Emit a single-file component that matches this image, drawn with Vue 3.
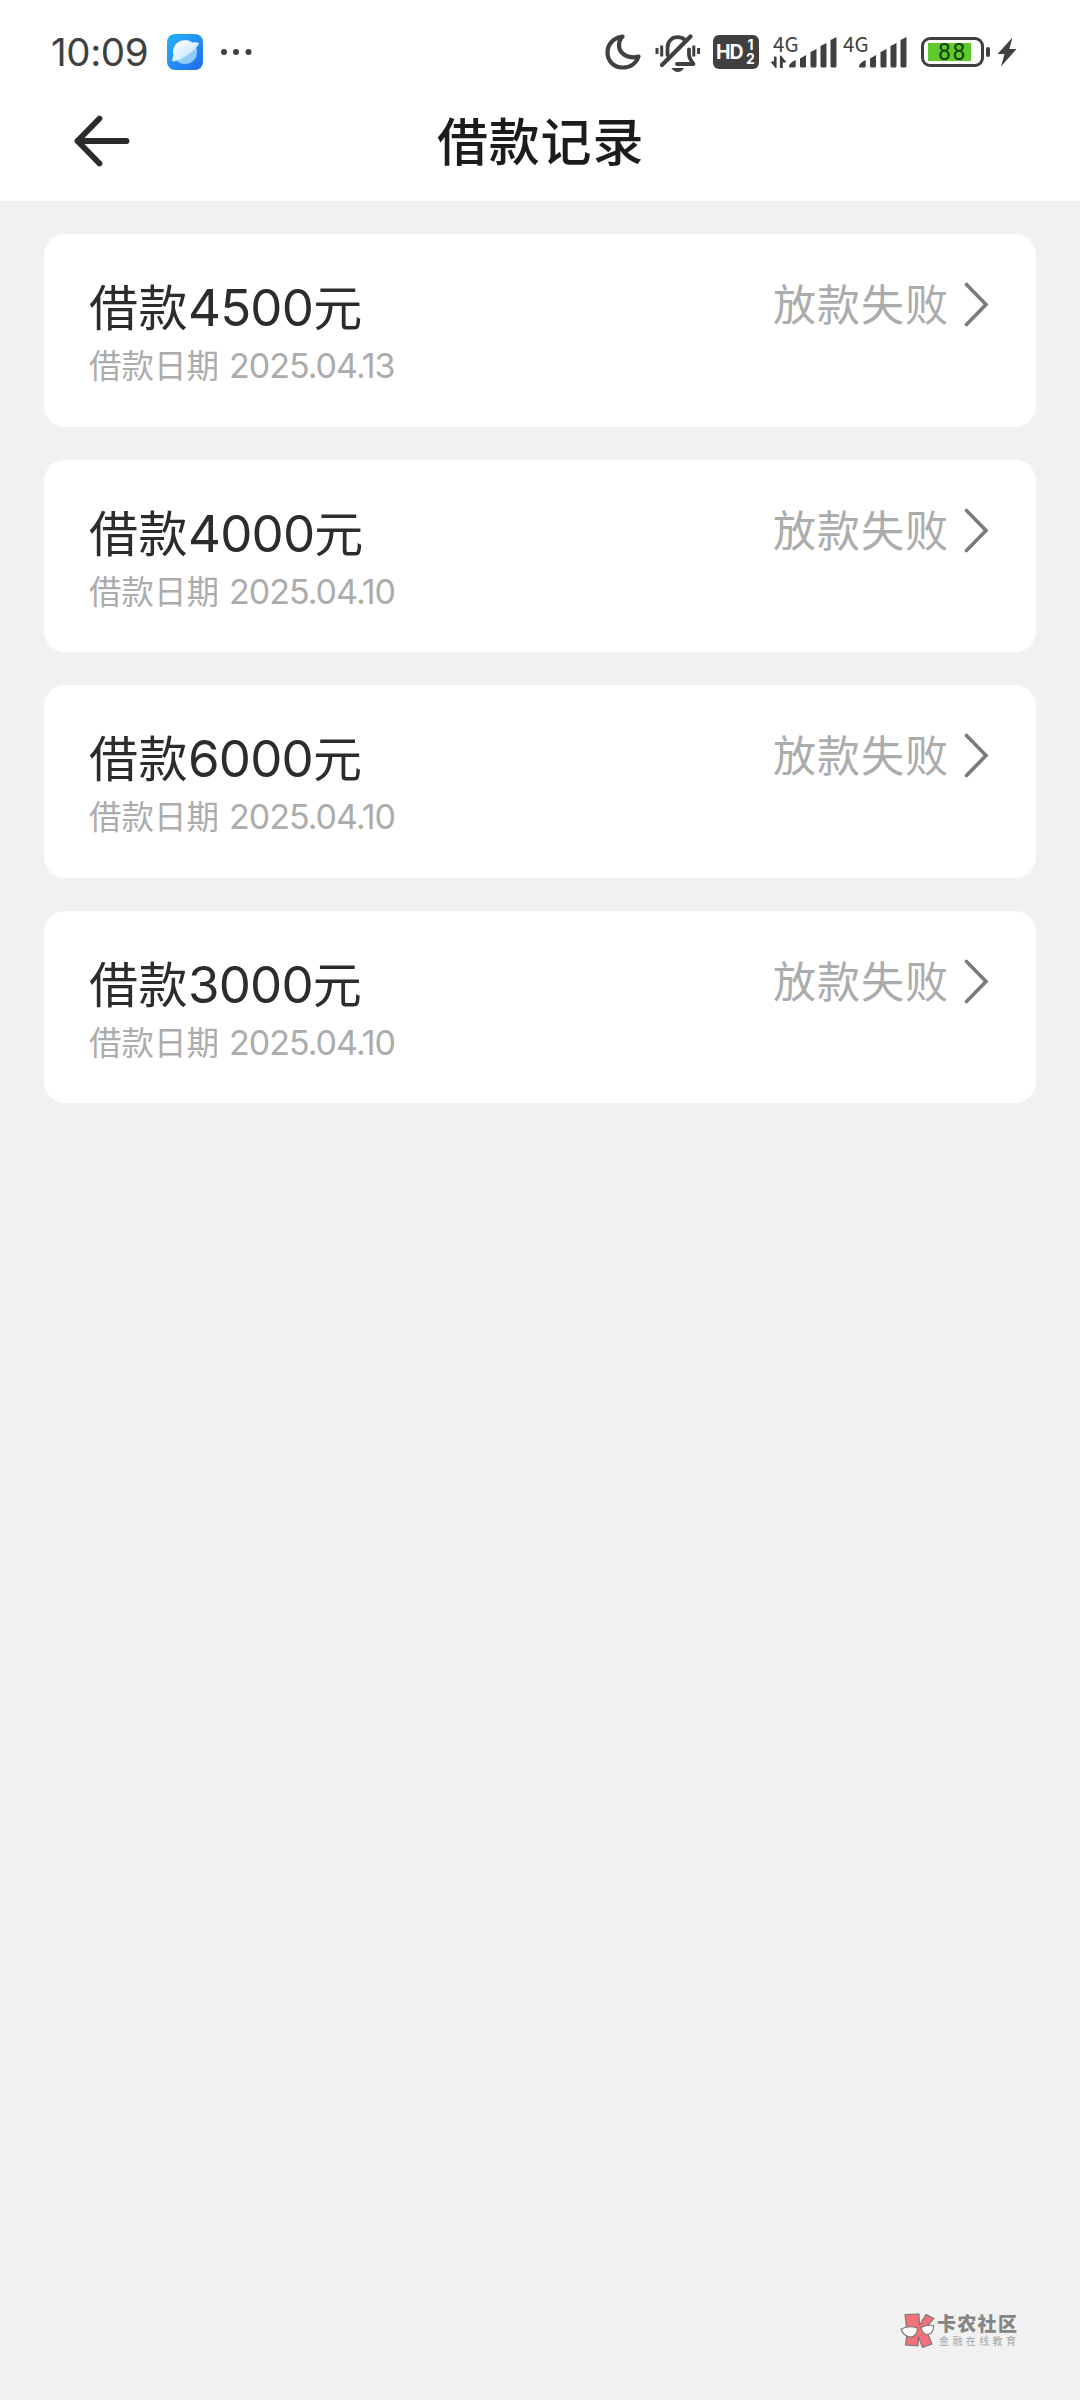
<script setup>
const records = [
  { amount: '4500', date: '2025.04.13' },
  { amount: '4000', date: '2025.04.10' },
  { amount: '6000', date: '2025.04.10' },
  { amount: '3000', date: '2025.04.10' },
]
</script>

<template>
  <div class="screen">
    <header class="top">
      <div class="status-bar">
        <span class="clock">10:09</span>
        <svg class="app-icon" width="36" height="36" viewBox="0 0 36 36">
          <defs>
            <linearGradient id="sky" x1="0" y1="0" x2="1" y2="1">
              <stop offset="0" stop-color="#25b5f5" />
              <stop offset="1" stop-color="#2268ee" />
            </linearGradient>
            <linearGradient id="planet" x1="0" y1="0" x2="1" y2="1">
              <stop offset="0" stop-color="#fff" />
              <stop offset="1" stop-color="#b9e2fc" />
            </linearGradient>
          </defs>
          <rect width="36" height="36" rx="8" fill="url(#sky)" />
          <circle cx="18" cy="18" r="12" fill="#8fcbfb" />
          <path d="M6.500 21.500A12 12 0 0 1 25 8.400Q31 7.600 32 9.400C30 15 16 26 6 27.500Q4.300 26.500 6.500 21.500Z" fill="url(#planet)" />
        </svg>
        <svg class="dots" width="32" height="8" viewBox="0 0 32 8" fill="#404040">
          <circle cx="4" cy="4" r="3" /><circle cx="16" cy="4" r="3" /><circle cx="28.500" cy="4" r="3" />
        </svg>
        <svg class="moon" width="36" height="36" viewBox="0 0 36 36">
          <path d="M17.500 2.500C7.500 4 2.500 11 2.500 18.500C2.500 27 9 33.500 17.500 33.500C25.500 33.500 31.500 29 33.500 22.500C31.500 23.500 29 23.500 26 23.200C19 22.500 14 17.500 14 11.500C14 8 15 5 17.500 2.500Z" fill="none" stroke="#404040" stroke-width="4.200" stroke-linejoin="round" />
        </svg>
        <svg class="bell" width="46" height="40" viewBox="0 0 46 40" fill="none" stroke="#404040" stroke-width="3.800" stroke-linecap="round" stroke-linejoin="round">
          <path d="M12.500 22V15C12.500 8 17 4.200 22.500 4.200C25.500 4.200 28 5.200 30 7" />
          <path d="M34 16.500V22Q34.500 26 38.500 31H22" />
          <path d="M35.500 3.500L7 32" stroke-width="4.200" />
          <path d="M2 15V21M6.700 12.500V23.500M38.800 12.500V23.500M43.600 15V21" stroke-width="3" stroke-linecap="butt" />
          <path d="M16.500 35H29Q26.500 39 22.800 39Q19 39 16.500 35Z" fill="#404040" stroke="none" />
        </svg>
        <span class="hd"><span class="hd-main">HD</span><span class="hd-sims"><span>1</span><span>2</span></span></span>
        <span class="signal first">
          <span class="net">4G</span>
          <svg width="66" height="34" viewBox="0 0 66 34" fill="#404040">
            <path d="M5 22V32.500L0.500 27H3.500V22ZM9.500 21L14.500 27H11.200V32.500H9.500Z" stroke="#404040" stroke-width="1.200" stroke-linejoin="round" />
            <path d="M18 31.500Q18 28 24.700 25V31Q24.700 32.500 23.200 32.500H19Q18 32.500 18 31.500ZM29 23.500L35 20V31Q35 32.500 33.500 32.500H30.500Q29 32.500 29 31ZM39.500 17L45.500 14V31Q45.500 32.500 44 32.500H41Q39.500 32.500 39.500 31ZM49.500 11L55.500 8V31Q55.500 32.500 54 32.500H51Q49.500 32.500 49.500 31ZM59.500 5L65.500 2V31Q65.500 32.500 64 32.500H61Q59.500 32.500 59.500 31Z" />
          </svg>
        </span>
        <span class="signal second">
          <span class="net">4G</span>
          <svg width="66" height="34" viewBox="0 0 66 34" fill="#404040">
            <path d="M18 31.500Q18 28 24.700 25V31Q24.700 32.500 23.200 32.500H19Q18 32.500 18 31.500ZM29 23.500L35 20V31Q35 32.500 33.500 32.500H30.500Q29 32.500 29 31ZM39.500 17L45.500 14V31Q45.500 32.500 44 32.500H41Q39.500 32.500 39.500 31ZM49.500 11L55.500 8V31Q55.500 32.500 54 32.500H51Q49.500 32.500 49.500 31ZM59.500 5L65.500 2V31Q65.500 32.500 64 32.500H61Q59.500 32.500 59.500 31Z" />
          </svg>
        </span>
        <span class="battery"><span class="charge">88</span></span>
        <span class="nub"></span>
        <svg class="bolt" width="20" height="30" viewBox="0 0 20 30">
          <path d="M15.500 0.500L0.500 17H7.500L4 29.500L19.500 12H12.300Z" fill="#404040" />
        </svg>
      </div>
      <div class="nav">
        <svg class="back" width="58" height="54" viewBox="0 0 58 54" fill="none" stroke="#2b2b2b" stroke-width="5.800" stroke-linecap="round" stroke-linejoin="round">
          <path d="M26.500 4.500L4.500 27L26.500 49.500M4.500 27H53.500" />
        </svg>
        <h1>借款记录</h1>
      </div>
    </header>

    <main class="list">
      <section v-for="(record, i) in records" :key="i" class="card">
        <div class="info">
          <div class="amount">借款<span class="digits">{{ record.amount }}</span>元</div>
          <div class="date">借款日期<span class="digits">{{ record.date }}</span></div>
        </div>
        <div class="state">
          <span class="label">放款失败</span>
          <svg width="26" height="46" viewBox="0 0 26 46" fill="none" stroke="#7a7a7a" stroke-width="3.600" stroke-linecap="round" stroke-linejoin="miter">
            <path d="M2.500 3.500L22 23.500L2.500 43.500" />
          </svg>
        </div>
      </section>
    </main>

    <footer class="brand">
      <svg width="35" height="36" viewBox="0 0 35 36" stroke="#777" stroke-width="1.100" stroke-linejoin="round">
        <path d="M5 1.500L19 1L19.500 12L26 1.500L34 5.500L25.500 15L32 31L22.500 34.500L18.500 24L18 33L5.500 32L7 20Z" fill="#f0717c" />
        <path d="M1 16Q9 12 17.500 15Q17 23.500 10.500 24Q3.500 23.500 1 16Z" fill="#fafafa" />
        <path d="M21 14.500Q27 11.500 33.500 12.500Q34 20.500 28 21.500Q22.500 21.500 21 14.500Z" fill="#fafafa" />
      </svg>
      <div class="brand-text">
        <div class="brand-name">卡农社区</div>
        <div class="brand-sub">金融在线教育</div>
      </div>
    </footer>
  </div>
</template>

<style>
body {
  margin: 0;
  background: #f1f1f1;
}
</style>

<style scoped>
.screen {
  box-sizing: border-box;
  width: 1080px;
  height: 2400px;
  display: flex;
  flex-direction: column;
  overflow: hidden;
  background: #f1f1f1;
  font-family: "Noto Sans CJK SC", sans-serif;
}
svg {
  display: block;
  flex: none;
}
.top {
  height: 201px;
  flex: none;
  background: #fff;
}
.status-bar {
  display: flex;
  align-items: center;
  height: 104px;
  box-sizing: border-box;
  padding-left: 51px;
  color: #404040;
}
.clock {
  width: 116px;
  flex: none;
  font: 400 38.500px/44px Inter, sans-serif;
  letter-spacing: -0.4px;
}
.dots {
  margin-left: 17px;
}
.moon {
  margin-left: 353px;
}
.bell {
  margin-left: 14px;
  margin-top: 2px;
}
.hd {
  display: flex;
  box-sizing: border-box;
  width: 46px;
  height: 34px;
  margin-left: 12px;
  padding-left: 3px;
  flex: none;
  border-radius: 6px;
  background: #404040;
  color: #fff;
  font-family: Inter, sans-serif;
  font-weight: 700;
}
.hd-main {
  width: 30px;
  font-size: 19.500px;
  line-height: 35px;
  letter-spacing: -1px;
}
.hd-sims {
  display: flex;
  flex-direction: column;
  padding-top: 3px;
  font-size: 14px;
  line-height: 14px;
  text-align: center;
}
.signal {
  position: relative;
  flex: none;
}
.first {
  margin-left: 12px;
}
.second {
  margin-left: 4px;
}
.net {
  position: absolute;
  left: 2px;
  top: -2px;
  font: 400 20.500px/20px "Noto Sans CJK SC", sans-serif;
}
.battery {
  box-sizing: border-box;
  width: 63px;
  height: 30px;
  margin-left: 14px;
  padding: 3px 0 0 4px;
  flex: none;
  border: 3px solid #404040;
  border-radius: 9px;
}
.charge {
  display: block;
  width: 43px;
  height: 18px;
  background: #60c92c;
  color: #143f08;
  font: 400 23px/20px Roboto, sans-serif;
  letter-spacing: 1.500px;
  text-indent: 10px;
}
.nub {
  width: 4px;
  height: 10px;
  margin-left: 2px;
  border-radius: 2px;
  background: #404040;
}
.bolt {
  margin-left: 7px;
}
.nav {
  display: flex;
  align-items: center;
  height: 74px;
}
.back {
  margin-left: 73px;
}
h1 {
  margin: 0 0 0 306px;
  color: #1c1c1c;
  font-size: 51px;
  font-weight: 500;
  line-height: 70px;
  height: 74px;
  letter-spacing: 0.8px;
}
.list {
  display: flex;
  flex-direction: column;
  gap: 33px;
  padding: 33px 44px 0;
}
.card {
  display: flex;
  justify-content: space-between;
  box-sizing: border-box;
  height: 192.500px;
  padding: 41px 46px 0 45px;
  border-radius: 21px;
  background: #fff;
}
.digits {
  font-family: Inter, sans-serif;
}
.amount {
  height: 58px;
  color: #2c2c2c;
  font-size: 49px;
  line-height: 60px;
  letter-spacing: 0.5px;
}
.amount .digits {
  font-size: 51px;
  letter-spacing: -0.8px;
}
.date {
  height: 46px;
  margin-top: 8px;
  color: #acacac;
  font-size: 32.500px;
  line-height: 46px;
}
.date .digits {
  margin-left: 10px;
  font-size: 34px;
  letter-spacing: -1px;
}
.state {
  display: flex;
  align-items: center;
  height: 58px;
  color: #acacac;
  font-size: 43px;
  line-height: 58px;
  letter-spacing: 1px;
}
.label {
  height: 62px;
}
.state svg {
  margin-left: 15px;
}
.brand {
  display: flex;
  gap: 2px;
  margin-top: auto;
  padding: 0 0 51px 900px;
  color: #858585;
}
.brand-text {
  margin-top: -1px;
  white-space: nowrap;
}
.brand-name {
  font-size: 19px;
  font-weight: 900;
  line-height: 22px;
  letter-spacing: 1.300px;
}
.brand-sub {
  margin-left: 2px;
  color: #a5a5a5;
  font-size: 10px;
  line-height: 13px;
  letter-spacing: 3.400px;
}
</style>
